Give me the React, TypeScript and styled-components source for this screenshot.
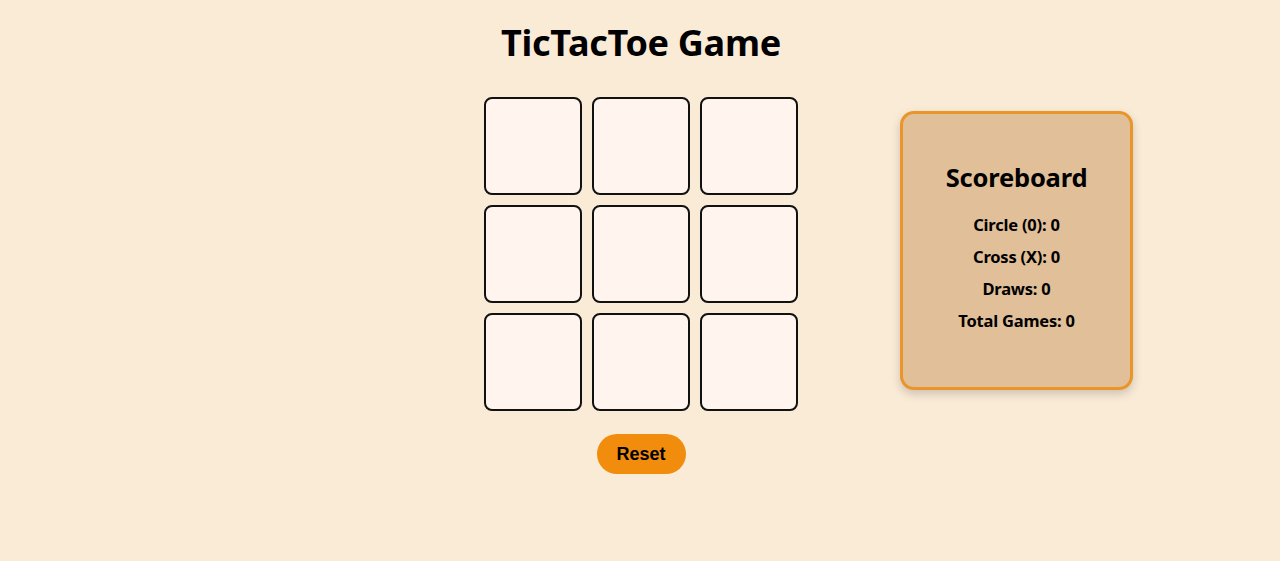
import React from "react";
import styled, { createGlobalStyle } from "styled-components";

const Global = createGlobalStyle`
  html, body { margin: 0; padding: 0; }
  body {
    background: #faebd7;
    font-family: "Noto Sans", "Open Sans", sans-serif;
    color: #000;
  }
`;

const Page = styled.div`
  display: grid;
  grid-template-columns: 1fr auto 1fr;
  min-height: 561px;
`;

const Game = styled.div`
  grid-column: 2;
  padding-left: 2px;
  display: flex;
  flex-direction: column;
  align-items: center;
`;

const Title = styled.h1`
  margin: 19px 0 0;
  font-size: 36px;
  line-height: 48px;
  font-weight: 700;
  letter-spacing: -0.3px;
`;

const Board = styled.div`
  margin-top: 30px;
  display: grid;
  grid-template-columns: repeat(3, 98px);
  grid-auto-rows: 98px;
  gap: 10px;
`;

const Cell = styled.button`
  box-sizing: border-box;
  background: #fff4ee;
  border: 2px solid #111;
  border-radius: 8px;
  padding: 0;
  cursor: pointer;
`;

const ResetButton = styled.button`
  margin-top: 23px;
  width: 89px;
  height: 40px;
  border: none;
  border-radius: 20px;
  background: #f28c0c;
  font-family: "Liberation Sans", Arial, sans-serif;
  font-weight: 700;
  font-size: 18px;
  color: #000;
  cursor: pointer;
`;

const Side = styled.div`
  grid-column: 3;
  padding: 111px 0 0 102px;
`;

const Scoreboard = styled.div`
  box-sizing: border-box;
  width: 233px;
  height: 279px;
  background: #e1bf98;
  border: 3px solid #e8952a;
  border-radius: 14px;
  box-shadow: 0 4px 10px rgba(0, 0, 0, 0.18);
  display: flex;
  flex-direction: column;
  align-items: center;
  padding-top: 46px;
`;

const ScoreTitle = styled.h2`
  margin: 0 0 15px;
  font-size: 25.5px;
  line-height: 34px;
  font-weight: 700;
  letter-spacing: -0.2px;
`;

const ScoreLine = styled.p`
  margin: 0;
  font-size: 16.5px;
  line-height: 32px;
  font-weight: 700;
  letter-spacing: -0.2px;
`;

export default function App() {
  return (
    <>
      <Global />
      <Page>
        <Game>
          <Title>TicTacToe Game</Title>
          <Board>
            {Array.from({ length: 9 }).map((_, i) => (
              <Cell key={i} aria-label={`cell ${i + 1}`} />
            ))}
          </Board>
          <ResetButton>Reset</ResetButton>
        </Game>
        <Side>
          <Scoreboard>
            <ScoreTitle>Scoreboard</ScoreTitle>
            <ScoreLine>Circle (0): 0</ScoreLine>
            <ScoreLine>Cross (X): 0</ScoreLine>
            <ScoreLine>Draws: 0</ScoreLine>
            <ScoreLine>Total Games: 0</ScoreLine>
          </Scoreboard>
        </Side>
      </Page>
    </>
  );
}
